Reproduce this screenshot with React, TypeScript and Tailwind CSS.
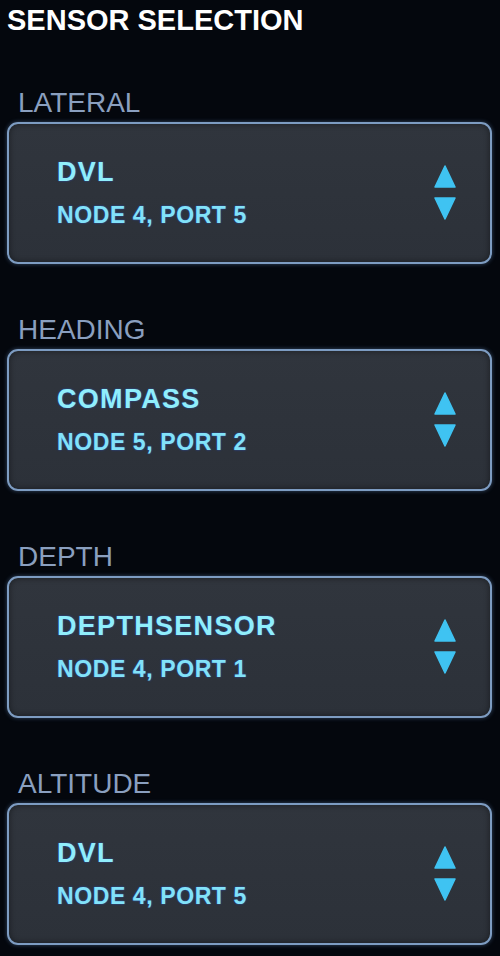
const sensors = [
  { label: "LATERAL", name: "DVL", node: "NODE 4, PORT 5" },
  { label: "HEADING", name: "COMPASS", node: "NODE 5, PORT 2" },
  { label: "DEPTH", name: "DEPTHSENSOR", node: "NODE 4, PORT 1" },
  { label: "ALTITUDE", name: "DVL", node: "NODE 4, PORT 5" },
];

function Stepper() {
  return (
    <svg width="22" height="56" viewBox="0 0 22 56" className="shrink-0">
      <polygon
        points="11,1 21,22 1,22"
        fill="#3fc3f2"
        stroke="#3fc3f2"
        strokeWidth="1.5"
        strokeLinejoin="round"
      />
      <polygon
        points="1,33 21,33 11,54"
        fill="#3fc3f2"
        stroke="#3fc3f2"
        strokeWidth="1.5"
        strokeLinejoin="round"
      />
    </svg>
  );
}

function SensorCard({
  label,
  name,
  node,
  first,
}: {
  label: string;
  name: string;
  node: string;
  first?: boolean;
}) {
  return (
    <div className={first ? "mt-[54px]" : "mt-[52px]"}>
      <div className="ml-[11px] text-[28px] leading-none text-[#8a9fbf]">
        {label}
      </div>
      <div className="mt-[5px] flex h-[142px] items-start justify-between rounded-[11px] border-2 border-[#7d9cc2] bg-gradient-to-b from-[#30353d] to-[#2c3139] shadow-[0_0_4px_rgba(110,150,205,0.45),inset_0_0_6px_rgba(0,0,0,0.45)]">
        <div className="pl-[48px] pt-[35px] font-bold [text-shadow:0_0_2px_rgba(40,90,230,0.8)]">
          <div className="text-[27px] leading-none tracking-[1.3px] text-[#90eefb]">
            {name}
          </div>
          <div className="mt-[18px] text-[23px] leading-none tracking-[0.6px] text-[#82e2f8]">
            {node}
          </div>
        </div>
        <div className="mr-[34px] mt-[41px]">
          <Stepper />
        </div>
      </div>
    </div>
  );
}

export default function App() {
  return (
    <div className="h-[956px] w-[500px] overflow-hidden bg-[#04070d] pl-[7px] pr-[8px] pt-[6px] font-['Liberation_Sans',Arial,sans-serif]">
      <div className="text-[29px] font-bold leading-none text-white">
        SENSOR SELECTION
      </div>
      {sensors.map((s, i) => (
        <SensorCard key={s.label} {...s} first={i === 0} />
      ))}
    </div>
  );
}
